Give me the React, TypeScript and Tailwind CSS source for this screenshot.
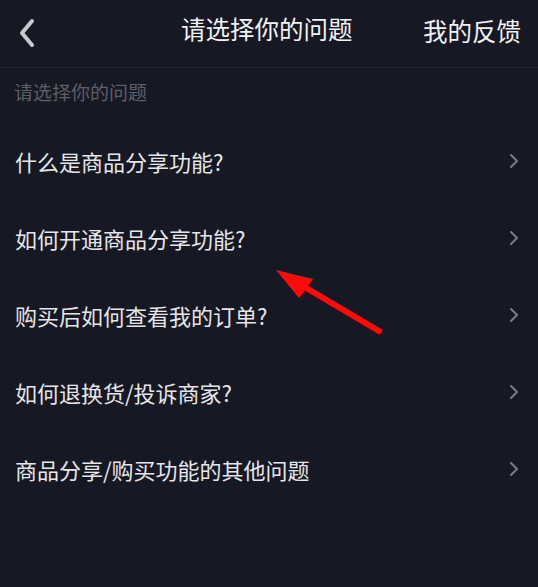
import { ChevronRight } from "lucide-react";

const questions = [
  "什么是商品分享功能?",
  "如何开通商品分享功能?",
  "购买后如何查看我的订单?",
  "如何退换货/投诉商家?",
  "商品分享/购买功能的其他问题",
];

const font = "font-['Noto_Sans_CJK_SC','Noto_Sans',sans-serif]";

export default function App() {
  return (
    <div className={`relative h-[587px] w-[538px] overflow-hidden bg-[#161823] ${font}`}>
      <header className="relative flex h-[68px] items-center border-b border-[#25272f] px-[15px]">
        <svg width="20" height="32" viewBox="0 0 20 32" className="ml-[2px] mt-[-2px]">
          <path
            d="M15 4 L5 16 L15 28"
            fill="none"
            stroke="#c9c9cc"
            strokeWidth="4"
            strokeLinecap="round"
            strokeLinejoin="round"
          />
        </svg>
        <h1 className="absolute left-[181px] top-[14px] text-[24.5px] leading-[30px] text-[#f2f2f3]">
          请选择你的问题
        </h1>
        <span className="ml-auto mr-[2px] mt-[-6px] text-[24.5px] leading-[30px] text-[#f2f2f3]">
          我的反馈
        </span>
      </header>

      <p className="h-[55px] pl-[14px] pt-[11px] text-[19px] leading-[26px] text-[#5d5f67]">
        请选择你的问题
      </p>

      <ul>
        {questions.map((q) => (
          <li key={q} className="flex h-[77px] items-center justify-between pl-[15px] pr-[12px]">
            <span className="mt-[-2px] text-[22px] leading-[28px] text-[#e6e6e8]">{q}</span>
            <ChevronRight className="mt-[-2px] h-[24px] w-[24px] text-[#7b7c82]" strokeWidth={2} />
          </li>
        ))}
      </ul>

      <svg className="absolute left-0 top-0" width="538" height="587" viewBox="0 0 538 587">
        <line x1="379" y1="331" x2="303" y2="286" stroke="#ff0a0a" strokeWidth="6" strokeLinecap="round" />
        <polygon points="276,270 313,279 299,298" fill="#ff0a0a" />
      </svg>
    </div>
  );
}
